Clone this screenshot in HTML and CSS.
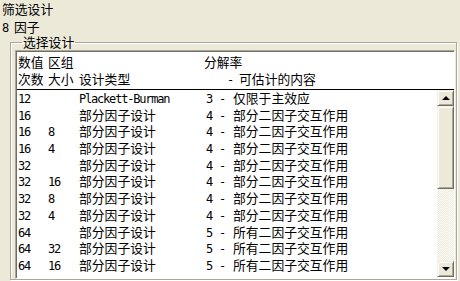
FILE: index.html
```html
<!DOCTYPE html>
<html>
<head>
    <title>筛选设计</title>
    <link rel="stylesheet" href="styles.css">
</head>
<body>
    <div class="dialog">
        <div class="caption">筛选设计</div>
        <div class="caption"><span class="num">8 </span>因子</div>

        <fieldset class="group">
            <legend>选择设计</legend>
            <div class="listbox">
                <div class="list-head">
                    <span>数值</span><span>区组</span><span></span><span>分解率</span>
                    <span>次数</span><span>大小</span><span>设计类型</span><span class="est-head"><span class="num">- </span>可估计的内容</span>
                </div>
                <div class="list-body">
                    <div class="rows">
                        <div class="row"><span class="num">12</span><span class="num"></span><span class="num">Plackett-Burman</span><span class="num">3</span><span class="num">-</span><span>仅限于主效应</span></div>
                        <div class="row"><span class="num">16</span><span class="num"></span><span>部分因子设计</span><span class="num">4</span><span class="num">-</span><span>部分二因子交互作用</span></div>
                        <div class="row"><span class="num">16</span><span class="num">8</span><span>部分因子设计</span><span class="num">4</span><span class="num">-</span><span>部分二因子交互作用</span></div>
                        <div class="row"><span class="num">16</span><span class="num">4</span><span>部分因子设计</span><span class="num">4</span><span class="num">-</span><span>部分二因子交互作用</span></div>
                        <div class="row"><span class="num">32</span><span class="num"></span><span>部分因子设计</span><span class="num">4</span><span class="num">-</span><span>部分二因子交互作用</span></div>
                        <div class="row"><span class="num">32</span><span class="num">16</span><span>部分因子设计</span><span class="num">4</span><span class="num">-</span><span>部分二因子交互作用</span></div>
                        <div class="row"><span class="num">32</span><span class="num">8</span><span>部分因子设计</span><span class="num">4</span><span class="num">-</span><span>部分二因子交互作用</span></div>
                        <div class="row"><span class="num">32</span><span class="num">4</span><span>部分因子设计</span><span class="num">4</span><span class="num">-</span><span>部分二因子交互作用</span></div>
                        <div class="row"><span class="num">64</span><span class="num"></span><span>部分因子设计</span><span class="num">5</span><span class="num">-</span><span>所有二因子交互作用</span></div>
                        <div class="row"><span class="num">64</span><span class="num">32</span><span>部分因子设计</span><span class="num">5</span><span class="num">-</span><span>所有二因子交互作用</span></div>
                        <div class="row"><span class="num">64</span><span class="num">16</span><span>部分因子设计</span><span class="num">5</span><span class="num">-</span><span>所有二因子交互作用</span></div>
                    </div>
                    <div class="scrollbar">
                        <div class="sb-btn"><span class="arrow-up"></span></div>
                        <div class="sb-thumb"></div>
                        <div class="sb-track"></div>
                        <div class="sb-btn"><span class="arrow-down"></span></div>
                    </div>
                </div>
            </div>
        </fieldset>
    </div>
</body>
</html>
```

FILE: styles.css
```css
html, body {
    margin: 0;
    height: 281px;
    overflow: hidden;
}
body {
    background: #ece9d8;
    color: #000;
    font-family: "Noto Sans CJK SC", sans-serif;
    font-size: 12.8px;
}
.num {
    font-family: "DejaVu Sans Mono", "Noto Sans CJK SC", monospace;
    font-size: 12px;
    letter-spacing: -1.2px;
    white-space: pre;
}
.caption {
    height: 17px;
    line-height: 17px;
    padding-left: 2px;
}
.caption:first-child {
    height: 18px;
}
.group {
    margin: 0 3px 0 10px;
    padding: 1px 1px 0 4px;
    border: 1px solid #aca899;
    box-shadow: inset 1px 1px 0 #fff, 1px 1px 0 #fff;
}
.group legend {
    margin-left: 7px;
    padding: 0 1px;
    height: 14px;
    line-height: 14px;
}
.listbox {
    background: white;
    border: 1px solid;
    border-color: #aca899 #fff #fff #aca899;
    box-shadow: inset 1px 1px 0 #716f64;
    padding: 1px 0 0 1px;
}
.list-head {
    display: grid;
    grid-template-columns: 30px 31px 125px 1fr;
    align-items: baseline;
    line-height: 17px;
    padding: 1px 0 0 1px;
    border-bottom: 1px solid #000;
}
.est-head {
    padding-left: 23px;
}
.list-body {
    display: flex;
    height: 188px;
}
.rows {
    flex: 1;
    padding-left: 1px;
}
.row {
    display: grid;
    grid-template-columns: 30px 31px 127px 13px 14px 1fr;
    align-items: baseline;
    height: 16.7px;
    line-height: 16.7px;
    white-space: nowrap;
}
.scrollbar {
    width: 17px;
    height: 187px;
    display: flex;
    flex-direction: column;
}
.sb-btn, .sb-thumb {
    background: #ece9d8;
    border: 1px solid;
    border-color: #f1efe2 #716f64 #716f64 #f1efe2;
    box-shadow: inset 1px 1px 0 #fff, inset -1px -1px 0 #aca899;
    box-sizing: border-box;
}
.sb-btn {
    height: 16px;
    display: flex;
    align-items: center;
    justify-content: center;
}
.sb-thumb {
    height: 83px;
}
.sb-track {
    flex: 1;
    background-color: #fff;
    background-image: conic-gradient(#ece9d8 25%, #fff 0 50%, #ece9d8 0 75%, #fff 0);
    background-size: 2px 2px;
}
.arrow-up {
    border-left: 4px solid transparent;
    border-right: 4px solid transparent;
    border-bottom: 4px solid #000;
}
.arrow-down {
    border-left: 4px solid transparent;
    border-right: 4px solid transparent;
    border-top: 4px solid #000;
}
```
